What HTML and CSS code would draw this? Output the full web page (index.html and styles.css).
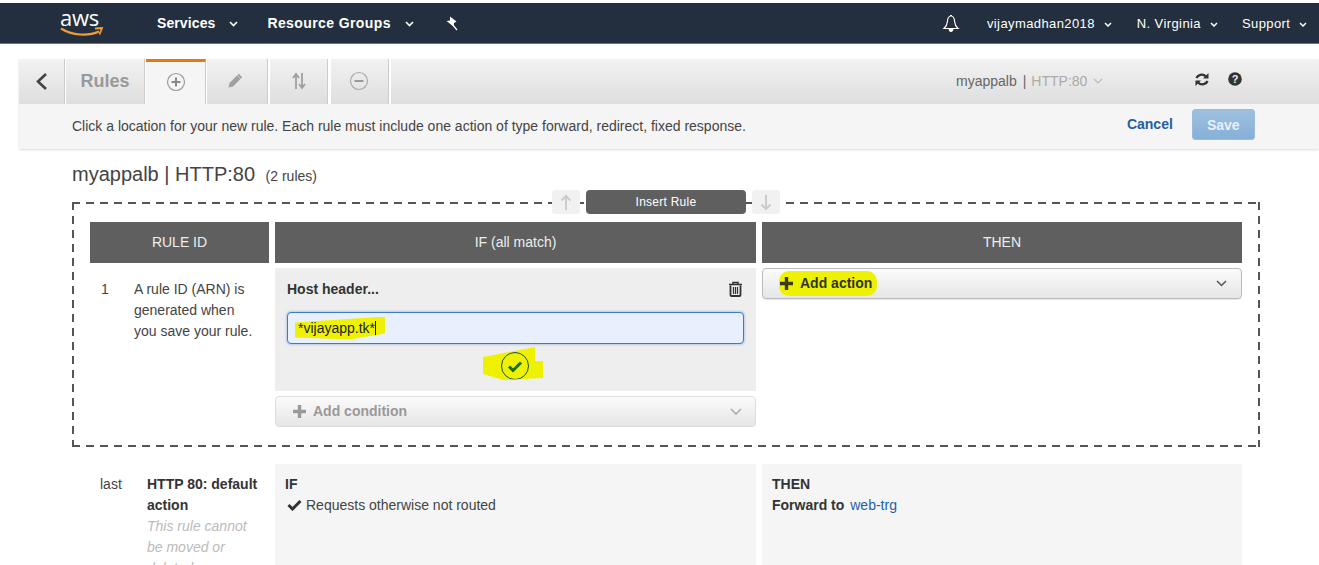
FILE: index.html
```html
<!DOCTYPE html>
<html lang="en">
<head>
    <meta charset="UTF-8">
    <meta name="viewport" content="width=device-width, initial-scale=1.0">
    <title>Rules</title>
    <link rel="stylesheet" href="styles.css">
</head>
<body>
    <!-- Top navigation -->
    <header class="nav">
        <div class="logo">
            <span class="logo-text">aws</span>
            <svg class="logo-smile" width="44" height="12" viewBox="0 0 44 12"><path d="M1 2.500C12 9.500 28 10.500 39 5.500" fill="none" stroke="#f19e38" stroke-width="2.200"/><path d="M35 2.500l7-.5-2.500 6.500" fill="none" stroke="#f19e38" stroke-width="1.800"/></svg>
        </div>
        <a class="nav-main nav-services">Services<svg class="caret" width="9" height="6" viewBox="0 0 9 6"><path d="M1 1l3.500 3.500L8 1" fill="none" stroke="#fff" stroke-width="1.600"/></svg></a>
        <a class="nav-main nav-groups">Resource Groups<svg class="caret" width="9" height="6" viewBox="0 0 9 6"><path d="M1 1l3.500 3.500L8 1" fill="none" stroke="#fff" stroke-width="1.600"/></svg></a>
        <svg class="pin" width="14" height="15" viewBox="0 0 14 15"><path d="M5 .5l6.500 5-2.500 1.500-.5 3.500L1.500 5l3.500-.5z" fill="#fff"/><path d="M7 8l5 6" stroke="#fff" stroke-width="1.200"/></svg>
        <svg class="bell" width="18" height="19" viewBox="0 0 18 19"><path d="M9 2C5.800 2 5.500 5 5.300 8c-.2 3-1.500 5-3.300 6.500h14C14.200 13 12.900 11 12.700 8 12.500 5 12.200 2 9 2z" fill="none" stroke="#fff" stroke-width="1.200"/><path d="M7 15.500a2 2 0 0 0 4 0zM8 1.500h2" fill="#fff" stroke="#fff"/></svg>
        <a class="nav-side nav-user">vijaymadhan2018<svg class="caret" width="8" height="5" viewBox="0 0 8 5"><path d="M1 1l3 3 3-3" fill="none" stroke="#fff" stroke-width="1.500"/></svg></a>
        <a class="nav-side nav-region">N. Virginia<svg class="caret" width="8" height="5" viewBox="0 0 8 5"><path d="M1 1l3 3 3-3" fill="none" stroke="#fff" stroke-width="1.500"/></svg></a>
        <a class="nav-side nav-support">Support<svg class="caret" width="8" height="5" viewBox="0 0 8 5"><path d="M1 1l3 3 3-3" fill="none" stroke="#fff" stroke-width="1.500"/></svg></a>
    </header>

    <!-- Tabs and action bar -->
    <section class="toolbar">
        <div class="tabs">
            <div class="tab tab-back"><svg width="13" height="19" viewBox="0 0 13 19"><path d="M11 2L3 9.500l8 7.500" fill="none" stroke="#444" stroke-width="2.600"/></svg></div>
            <div class="tab tab-rules">Rules</div>
            <div class="tab tab-add"><svg width="20" height="20" viewBox="0 0 20 20"><circle cx="10" cy="10" r="8.500" fill="none" stroke="#999" stroke-width="1.200"/><path d="M10 5.500v9M5.500 10h9" stroke="#888" stroke-width="2"/></svg></div>
            <div class="tab tab-edit"><svg width="16" height="16" viewBox="0 0 16 16"><path d="M1.500 14.500l1-4.500 7.500-7.500 3.500 3.500L6 13.500z" fill="#a0a0a0"/><path d="M11 1.500l3.500 3.500" stroke="#a0a0a0" stroke-width="2"/></svg></div>
            <div class="tab tab-sort"><svg width="14" height="18" viewBox="0 0 14 18"><path d="M4 17V3M1 6l3-4 3 4M10 1v14M7 12l3 4 3-4" fill="none" stroke="#a0a0a0" stroke-width="1.800"/></svg></div>
            <div class="tab tab-remove"><svg width="20" height="20" viewBox="0 0 20 20"><circle cx="10" cy="10" r="8.500" fill="none" stroke="#aaa" stroke-width="1.200"/><path d="M5.500 10h9" stroke="#999" stroke-width="2"/></svg></div>
            <div class="tabs-fill">
                <span class="lb-name">myappalb</span><span class="lb-sep">|</span><span class="lb-port">HTTP:80</span>
                <svg class="lb-caret" width="10" height="6" viewBox="0 0 10 6"><path d="M1 1l4 4 4-4" fill="none" stroke="#bbb" stroke-width="1.200"/></svg>
                <svg class="refresh" width="16" height="15" viewBox="0 0 16 15"><path d="M2.500 6C3.500 3 8.500 1 12 4.500M13.500 9c-1 3-6 5-9.500 1.500" fill="none" stroke="#333" stroke-width="2.400"/><path d="M14.500 1v5.500H9zM1.500 14V8.500H7z" fill="#333"/></svg>
                <svg class="help" width="14" height="14" viewBox="0 0 14 14"><circle cx="7" cy="7" r="6.800" fill="#333"/><text x="7" y="11" text-anchor="middle" class="help-mark">?</text></svg>
            </div>
        </div>
        <div class="actionbar">
            <span class="hint">Click a location for your new rule. Each rule must include one action of type forward, redirect, fixed response.</span>
            <a class="cancel">Cancel</a>
            <button class="save">Save</button>
        </div>
    </section>

    <main class="content">
        <h1 class="page-title">myappalb | HTTP:80 <small>(2 rules)</small></h1>

        <div class="rule-editor">
            <!-- Insert control sits on the dashed border -->
            <div class="insert">
                <span class="arrow-btn"><svg width="12" height="17" viewBox="0 0 12 17"><path d="M6 16V2M1.500 6.500L6 2l4.500 4.500" fill="none" stroke="#ccc" stroke-width="2"/></svg></span>
                <span class="insert-btn">Insert Rule</span>
                <span class="arrow-btn"><svg width="12" height="17" viewBox="0 0 12 17"><path d="M6 1v14M1.500 10.500L6 15l4.500-4.500" fill="none" stroke="#ccc" stroke-width="2"/></svg></span>
            </div>

            <div class="rule-grid">
                <div class="col-head">RULE ID</div>
                <div class="col-head">IF (all match)</div>
                <div class="col-head">THEN</div>

                <div class="rule-id">
                    <span class="rule-num">1</span>
                    <span class="rule-note">A rule ID (ARN) is generated when you save your rule.</span>
                </div>

                <div class="if-col">
                    <div class="condition">
                        <div class="condition-head">
                            <strong>Host header...</strong>
                            <svg width="15" height="16" viewBox="0 0 15 16"><path d="M1 3.500h13M5 3.500V1.500h5v2" fill="none" stroke="#333" stroke-width="1.500"/><path d="M2.500 4.500v9.500a1 1 0 0 0 1 1h8a1 1 0 0 0 1-1V4.500" fill="none" stroke="#333" stroke-width="1.800"/><path d="M5.500 6v7M7.500 6v7M9.500 6v7" stroke="#333" stroke-width="1.200"/></svg>
                        </div>
                        <div class="host-input"><span class="hl-input">*vijayapp.tk*<i class="cursor"></i></span></div>
                        <div class="check-row">
                            <span class="hl-check">
                                <svg width="28" height="28" viewBox="0 0 28 28"><circle cx="14" cy="14" r="13.500" fill="none" stroke="#1d4d4f" stroke-width="1"/><path d="M8 14.500l4 4 8-8" fill="none" stroke="#1a6b12" stroke-width="3"/></svg>
                            </span>
                        </div>
                    </div>
                    <div class="add-btn add-condition">
                        <svg class="plus" width="13" height="13" viewBox="0 0 13 13"><path d="M6.500 0v13M0 6.500h13" stroke="#999" stroke-width="3.400"/></svg>
                        <span>Add condition</span>
                        <svg class="chev" width="12" height="7" viewBox="0 0 12 7"><path d="M1 1l5 5 5-5" fill="none" stroke="#aaa" stroke-width="1.500"/></svg>
                    </div>
                </div>

                <div class="then-col">
                    <div class="add-btn add-action">
                        <span class="hl-action">
                            <svg class="plus" width="13" height="13" viewBox="0 0 13 13"><path d="M6.500 0v13M0 6.500h13" stroke="#3b3b0a" stroke-width="3.400"/></svg>
                            <span>Add action</span>
                        </span>
                        <svg class="chev" width="11" height="7" viewBox="0 0 11 7"><path d="M1 1l4.500 4.500L10 1" fill="none" stroke="#555" stroke-width="1.500"/></svg>
                    </div>
                </div>
            </div>
        </div>

        <div class="rule-grid last-rule">
            <div class="rule-id">
                <span class="rule-num last-num">last</span>
                <div class="last-note">
                    <strong>HTTP 80: default action</strong>
                    <em>This rule cannot be moved or deleted.</em>
                </div>
            </div>
            <div class="summary">
                <strong>IF</strong>
                <div><svg class="tick" width="15" height="12" viewBox="0 0 15 12"><path d="M1.500 6l4 4 8-8" fill="none" stroke="#333" stroke-width="3"/></svg>Requests otherwise not routed</div>
            </div>
            <div class="summary">
                <strong>THEN</strong>
                <div><strong>Forward to</strong> <a class="target">web-trg</a></div>
            </div>
        </div>
    </main>
</body>
</html>
```

FILE: styles.css
```css
* {
    box-sizing: border-box;
    margin: 0;
    padding: 0;
}

html, body {
    height: 565px;
    overflow: hidden;
}

body {
    background-color: #fff;
    color: #444;
    font-family: "Liberation Sans", Arial, sans-serif;
    font-size: 14px;
}

/* Top navigation */
.nav {
    display: flex;
    align-items: center;
    height: 41px;
    margin-top: 3px;
    background-color: #232f3e;
    color: #fff;
    border-bottom: 1px solid #6b7480;
}

.logo {
    position: relative;
    width: 44px;
    height: 38px;
    margin-left: 60px;
}

.logo-text {
    display: block;
    font-family: "Open Sans", sans-serif;
    font-size: 22px;
    line-height: 26px;
    letter-spacing: -0.3px;
}

.logo-smile {
    position: absolute;
    left: 0;
    top: 22px;
}

.caret {
    margin-left: 14px;
    vertical-align: 1px;
}

.nav-main {
    font-weight: bold;
    font-size: 14px;
    letter-spacing: 0.4px;
}

.nav-services { margin-left: 53px; letter-spacing: 0.1px; }
.nav-groups { margin-left: 29px; }
.pin { margin: 1px 0 0 31px; }
.bell { margin-left: 483px; }

.nav-side {
    font-size: 13px;
    letter-spacing: 0.4px;
}

.nav-side .caret { margin-left: 9px; }

.nav-user { margin-left: 27px; }
.nav-region { margin-left: 25px; }
.nav-support { margin-left: 24px; }

/* Tabs */
.toolbar {
    margin: 15px 0 0 19px;
    box-shadow: 0 1px 2px rgba(0, 0, 0, 0.15);
}

.tabs {
    display: flex;
    height: 45px;
}

.tab {
    display: flex;
    align-items: center;
    justify-content: center;
    height: 45px;
    margin-right: 1px;
    background: linear-gradient(#f2f2f2, #dedede);
    border-right: 1px solid #ccc;
}

.tab-back { width: 46px; }

.tab-rules {
    width: 79px;
    font-size: 18px;
    font-weight: bold;
    color: #999;
}

.tab-add {
    width: 60px;
    background: #f5f5f5;
    border-top: 3px solid #e47911;
    padding-bottom: 2px;
}

.tab-edit { width: 61px; margin-right: 2px; padding: 0 4px 2px 0; }
.tab-sort { width: 58px; margin-right: 3px; padding-bottom: 2px; }
.tab-remove { width: 58px; margin-right: 2px; padding: 0 1px 2px 0; }

.tabs-fill {
    flex: 1;
    display: flex;
    align-items: center;
    padding-left: 565px;
    padding-bottom: 2px;
    background: linear-gradient(#f2f2f2, #dedede);
    color: #666;
}

.lb-sep { margin: 0 5px 0 6px; }
.lb-port { color: #aaa; }
.lb-caret { margin-left: 6px; }
.refresh { margin: -3px 0 0 91px; }
.help { margin: -3px 0 0 18px; }

.help-mark {
    font-family: "Liberation Sans", sans-serif;
    font-size: 11px;
    font-weight: bold;
    fill: #eee;
}

.actionbar {
    display: flex;
    align-items: center;
    height: 45px;
    padding-left: 53px;
    background-color: #f5f5f5;
}

.hint {
    margin-bottom: 2px;
    color: #444;
}

.cancel {
    margin: 0 0 6px 381px;
    font-weight: bold;
    color: #1f5fa8;
}

.save {
    width: 63px;
    height: 31px;
    margin: 0 0 4px 19px;
    background: linear-gradient(#9dc0e0, #86b0d8);
    border: 1px solid #9cbcdc;
    border-radius: 3px;
    color: #e9f0f7;
    font: bold 14px "Liberation Sans", Arial, sans-serif;
}

/* Main content */
.content {
    padding: 0 0 0 72px;
}

.page-title {
    margin-top: 13px;
    font-size: 20px;
    font-weight: normal;
    line-height: 24px;
    color: #444;
}

.page-title small {
    margin-left: 5px;
    font-size: 14px;
}

/* Long dashes, a plain dashed border is too fine here */
.rule-editor {
    position: relative;
    width: 1188px;
    height: 245px;
    margin-top: 14px;
    padding: 20px 18px 0;
    background:
        repeating-linear-gradient(90deg, #555 0 8px, transparent 8px 14px) top / 100% 2px no-repeat,
        repeating-linear-gradient(90deg, #555 0 8px, transparent 8px 14px) bottom / 100% 2px no-repeat,
        repeating-linear-gradient(#555 0 8px, transparent 8px 14px) left / 2px 100% no-repeat,
        repeating-linear-gradient(#555 0 8px, transparent 8px 14px) right / 2px 100% no-repeat;
}

.insert {
    position: absolute;
    top: -12px;
    left: 480px;
    display: flex;
    gap: 6px;
}

.arrow-btn {
    display: flex;
    align-items: center;
    justify-content: center;
    width: 28px;
    height: 24px;
    background: #f1f1f1;
    border-radius: 3px;
}

.insert-btn {
    width: 160px;
    height: 24px;
    background-color: #5f5f5f;
    border-radius: 4px;
    color: #fff;
    font-size: 12px;
    letter-spacing: 0.25px;
    line-height: 24px;
    text-align: center;
}

.rule-grid {
    display: grid;
    grid-template-columns: 179px 481px 480px;
    column-gap: 6px;
}

.col-head {
    height: 41px;
    margin-bottom: 5px;
    background-color: #5f5f5f;
    color: #eee;
    line-height: 41px;
    text-align: center;
}

.rule-id {
    display: flex;
    line-height: 21px;
    padding-top: 11px;
}

.rule-num {
    width: 44px;
    padding-left: 11px;
    flex-shrink: 0;
}

.rule-note {
    width: 125px;
}

.condition {
    height: 123px;
    padding: 0 12px;
    background-color: #eee;
}

.condition-head {
    display: flex;
    align-items: center;
    justify-content: space-between;
    height: 44px;
    padding: 0 1px 2px 0;
    color: #333;
}

.host-input {
    display: flex;
    align-items: center;
    height: 32px;
    padding-left: 7px;
    background-color: #e8f0fe;
    border: 1px solid #3a7cc8;
    border-radius: 4px;
    box-shadow: 0 0 3px rgba(58, 124, 200, 0.6);
    color: #222;
}

/* Marker pen strokes from the screenshot */
.hl-input {
    position: relative;
    display: flex;
    align-items: center;
    width: 90px;
    height: 23px;
    padding-left: 3px;
    background-color: #eef200;
    clip-path: polygon(0 6px, 100% 0, 100% 17px, 55px 100%, 0 21px);
}

.cursor {
    position: absolute;
    left: 80px;
    top: 4px;
    width: 1px;
    height: 16px;
    background: #111;
}

.check-row {
    display: flex;
    margin-top: 3px;
}

.hl-check {
    width: 60px;
    height: 33px;
    padding: 5px 0 0 18px;
    margin-left: 196px;
    background-color: #eef200;
    clip-path: polygon(0 10px, 52px 0, 52px 14px, 60px 14px, 60px 31px, 20px 100%, 0 27px);
}

.add-btn {
    display: flex;
    align-items: center;
    height: 31px;
    background: linear-gradient(#fbfbfb, #e6e6e6);
    border: 1px solid #ddd;
    border-radius: 4px;
    font-weight: bold;
}

.add-condition {
    margin-top: 5px;
    padding: 0 13px 1px 17px;
    color: #999;
}

.add-condition .plus { margin-right: 7px; }
.chev { margin-left: auto; }

.add-action {
    padding: 0 14px 1px 16px;
    color: #333;
    border-color: #bbb;
    box-shadow: 0 1px 1px rgba(0, 0, 0, 0.1);
}

.hl-action {
    display: flex;
    align-items: center;
    gap: 7px;
    height: 25px;
    padding: 0 5px 0 1px;
    background-color: #eef200;
    border-radius: 10px;
}

/* Default rule, cut off by the window */
.last-rule {
    margin: 17px 0 0 18px;
}

.last-rule .rule-id {
    padding-top: 10px;
}

.last-num {
    width: 57px;
    padding-left: 10px;
}

.last-note {
    width: 116px;
}

.last-note strong {
    display: block;
    color: #333;
}

.last-note em {
    display: block;
    color: #bbb;
}

.summary {
    height: 120px;
    padding: 10px 10px 0;
    background-color: #f5f5f5;
    line-height: 21px;
    color: #444;
}

.summary strong {
    color: #333;
}

.tick {
    margin: 0 4px 0 2px;
    vertical-align: -1px;
}

.target {
    margin-left: 2px;
    color: #1f5fa8;
}
```
